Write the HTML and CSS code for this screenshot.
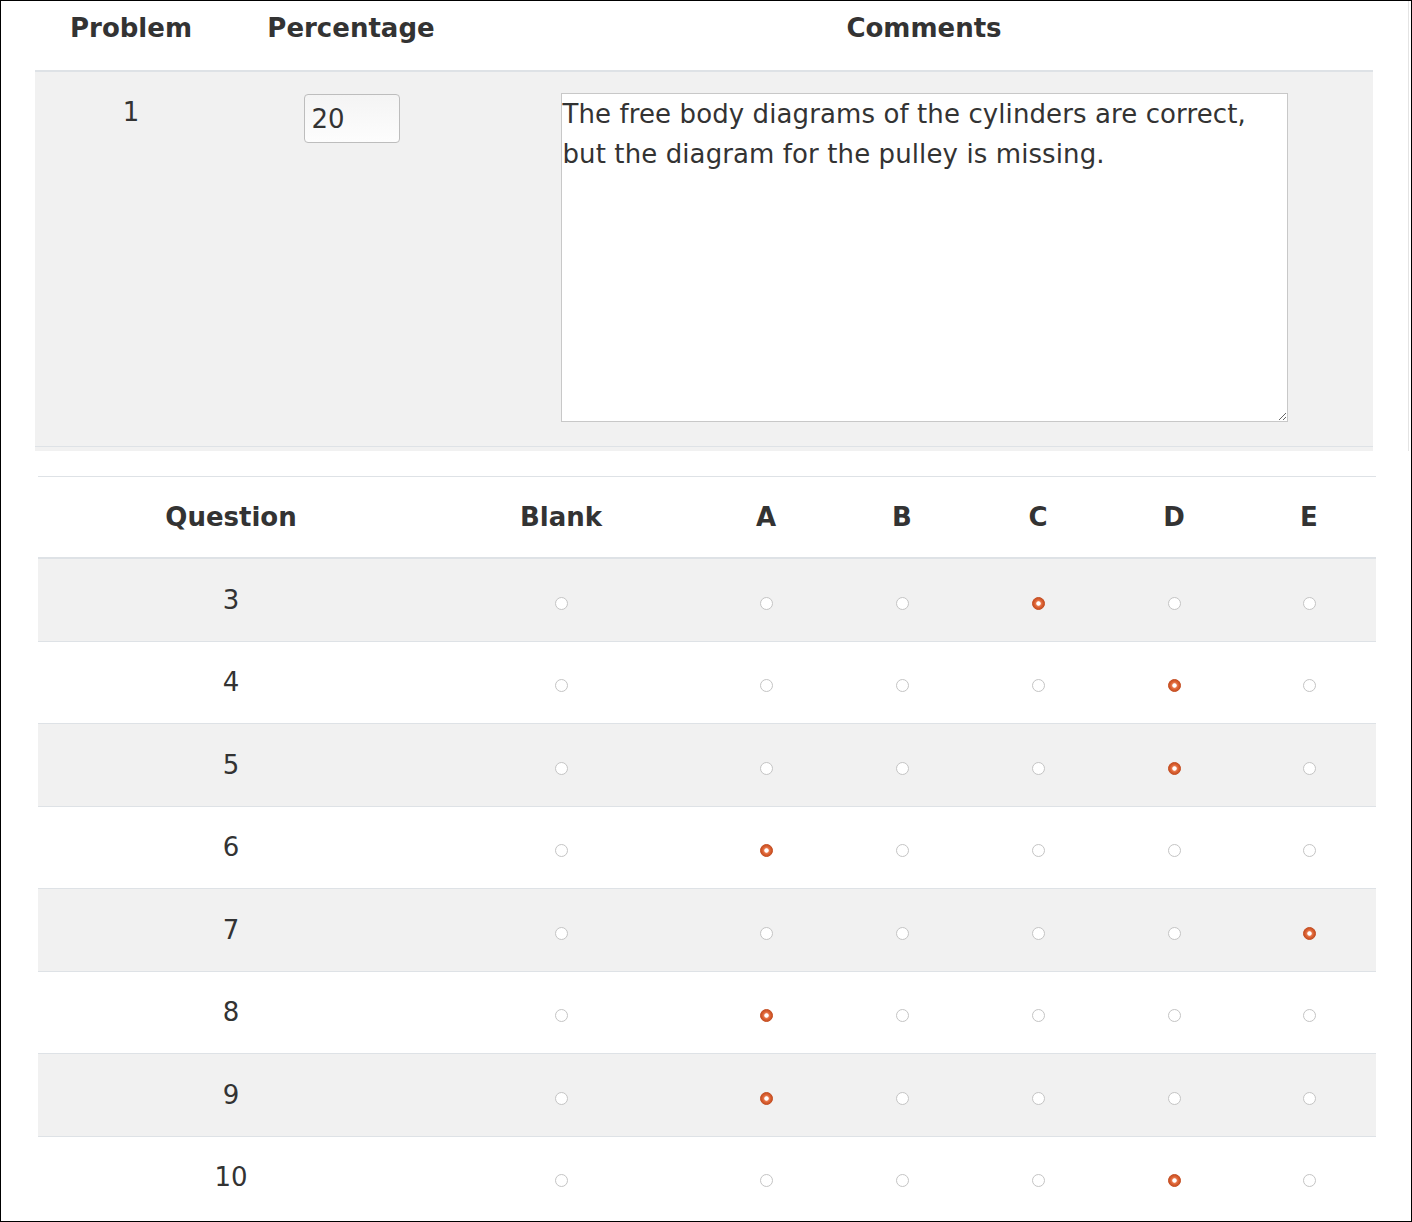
FILE: index.html
```html
<!DOCTYPE html>
<html>
<head>
<meta charset="utf-8">
<link rel="stylesheet" href="styles.css">
</head>
<body>
<div class="page">
  <div class="top">
    <table class="grade">
      <thead>
        <tr>
          <th class="c-prob">Problem</th>
          <th class="c-pct">Percentage</th>
          <th class="c-com">Comments</th>
        </tr>
      </thead>
      <tbody>
        <tr>
          <td class="c-prob">1</td>
          <td class="c-pct"><input class="pct" type="text" value="20"></td>
          <td class="c-com"><textarea class="comment">The free body diagrams of the cylinders are correct, but the diagram for the pulley is missing.</textarea></td>
        </tr>
      </tbody>
    </table>
    <div class="grade-foot"></div>
  </div>

  <table class="answers">
    <thead>
      <tr>
        <th class="c-q">Question</th>
        <th class="c-blank">Blank</th>
        <th class="c-opt">A</th>
        <th class="c-opt">B</th>
        <th class="c-opt">C</th>
        <th class="c-opt">D</th>
        <th class="c-last">E</th>
      </tr>
    </thead>
    <tbody>
      <tr class="odd">
        <td>3</td>
        <td><input class="rd" type="radio" name="q3"></td>
        <td><input class="rd" type="radio" name="q3"></td>
        <td><input class="rd" type="radio" name="q3"></td>
        <td><input class="rd" type="radio" name="q3" checked></td>
        <td><input class="rd" type="radio" name="q3"></td>
        <td><input class="rd" type="radio" name="q3"></td>
      </tr>
      <tr>
        <td>4</td>
        <td><input class="rd" type="radio" name="q4"></td>
        <td><input class="rd" type="radio" name="q4"></td>
        <td><input class="rd" type="radio" name="q4"></td>
        <td><input class="rd" type="radio" name="q4"></td>
        <td><input class="rd" type="radio" name="q4" checked></td>
        <td><input class="rd" type="radio" name="q4"></td>
      </tr>
      <tr class="odd">
        <td>5</td>
        <td><input class="rd" type="radio" name="q5"></td>
        <td><input class="rd" type="radio" name="q5"></td>
        <td><input class="rd" type="radio" name="q5"></td>
        <td><input class="rd" type="radio" name="q5"></td>
        <td><input class="rd" type="radio" name="q5" checked></td>
        <td><input class="rd" type="radio" name="q5"></td>
      </tr>
      <tr>
        <td>6</td>
        <td><input class="rd" type="radio" name="q6"></td>
        <td><input class="rd" type="radio" name="q6" checked></td>
        <td><input class="rd" type="radio" name="q6"></td>
        <td><input class="rd" type="radio" name="q6"></td>
        <td><input class="rd" type="radio" name="q6"></td>
        <td><input class="rd" type="radio" name="q6"></td>
      </tr>
      <tr class="odd">
        <td>7</td>
        <td><input class="rd" type="radio" name="q7"></td>
        <td><input class="rd" type="radio" name="q7"></td>
        <td><input class="rd" type="radio" name="q7"></td>
        <td><input class="rd" type="radio" name="q7"></td>
        <td><input class="rd" type="radio" name="q7"></td>
        <td><input class="rd" type="radio" name="q7" checked></td>
      </tr>
      <tr>
        <td>8</td>
        <td><input class="rd" type="radio" name="q8"></td>
        <td><input class="rd" type="radio" name="q8" checked></td>
        <td><input class="rd" type="radio" name="q8"></td>
        <td><input class="rd" type="radio" name="q8"></td>
        <td><input class="rd" type="radio" name="q8"></td>
        <td><input class="rd" type="radio" name="q8"></td>
      </tr>
      <tr class="odd">
        <td>9</td>
        <td><input class="rd" type="radio" name="q9"></td>
        <td><input class="rd" type="radio" name="q9" checked></td>
        <td><input class="rd" type="radio" name="q9"></td>
        <td><input class="rd" type="radio" name="q9"></td>
        <td><input class="rd" type="radio" name="q9"></td>
        <td><input class="rd" type="radio" name="q9"></td>
      </tr>
      <tr>
        <td>10</td>
        <td><input class="rd" type="radio" name="q10"></td>
        <td><input class="rd" type="radio" name="q10"></td>
        <td><input class="rd" type="radio" name="q10"></td>
        <td><input class="rd" type="radio" name="q10"></td>
        <td><input class="rd" type="radio" name="q10" checked></td>
        <td><input class="rd" type="radio" name="q10"></td>
      </tr>
    </tbody>
  </table>
</div>
</body>
</html>
```

FILE: styles.css
```css
html, body {
  margin: 0;
  padding: 0;
  background: #fff;
}

body {
  font-family: "DejaVu Sans", "Liberation Sans", sans-serif;
  color: #333;
}

.page {
  box-sizing: border-box;
  width: 1412px;
  height: 1222px;
  border: 1px solid #000;
  overflow: hidden;
}

.top {
  margin-right: 2px;
  padding-left: 34px;
  border-right: 1px solid #e4e4e4;
}

.grade {
  width: 1338px;
  border-collapse: collapse;
  table-layout: fixed;
}

.grade th {
  padding: 12px 0 27px 0;
  font-size: 26px;
  line-height: 30px;
  font-weight: bold;
  text-align: center;
  vertical-align: top;
  border-bottom: 2px solid #dee2e6;
}

.grade .c-prob { width: 192px; }
.grade .c-pct { width: 248px; }
.grade .c-com { width: 898px; }

.grade td {
  background: #f1f1f1;
  padding: 21px 0 24px 0;
  vertical-align: top;
  text-align: center;
  font-size: 26px;
  line-height: 39px;
  border-bottom: 1px solid #dee2e6;
}

.grade-foot {
  width: 1338px;
  height: 4px;
  background: #f1f1f1;
}

.pct {
  box-sizing: border-box;
  width: 96px;
  height: 49px;
  margin: 1px 0 0 1px;
  padding: 0 0 0 7px;
  border: 1px solid #bdbdbd;
  border-radius: 4px;
  background: linear-gradient(#f4f4f4, #fdfdfd);
  font-family: "DejaVu Sans", sans-serif;
  font-size: 26px;
  color: #333;
  vertical-align: top;
}

.comment {
  display: block;
  box-sizing: border-box;
  width: 727px;
  height: 329px;
  margin: 0 auto;
  padding: 0 1px;
  border: 1px solid #c8c8c8;
  border-radius: 0;
  background: #fff;
  font-family: "DejaVu Sans", sans-serif;
  font-size: 26px;
  letter-spacing: 0.1px;
  line-height: 40px;
  color: #333;
  text-align: left;
  resize: both;
  overflow: hidden;
}

.answers {
  margin: 25px 0 0 37px;
  width: 1338px;
  border-collapse: collapse;
  table-layout: fixed;
}

.answers th {
  height: 80px;
  padding: 0;
  font-size: 26px;
  font-weight: bold;
  text-align: center;
  vertical-align: middle;
  border-top: 1px solid #dee2e6;
  border-bottom: 2px solid #dee2e6;
}

.answers .c-q { width: 386px; }
.answers .c-blank { width: 274px; }
.answers .c-opt { width: 136px; }
.answers .c-last { width: 134px; }

.answers td {
  height: 81.5px;
  padding: 0;
  text-align: center;
  vertical-align: middle;
  font-size: 26px;
  border-top: 1px solid #dee2e6;
}

.answers tbody tr:first-child td {
  border-top: none;
}

.answers tr.odd td {
  background: #f1f1f1;
}

.rd {
  -webkit-appearance: none;
  appearance: none;
  box-sizing: border-box;
  width: 13px;
  height: 13px;
  margin: 4px 0 0 0;
  border: 1px solid #c4c4c4;
  border-radius: 50%;
  background: #fff;
  vertical-align: middle;
}

.rd:checked {
  border: 1px solid #c44e22;
  background: radial-gradient(circle, #fff 0 1.8px, #ea7a4e 2.6px, #d45a2c 4.5px, #c24a1f 100%);
}
```
